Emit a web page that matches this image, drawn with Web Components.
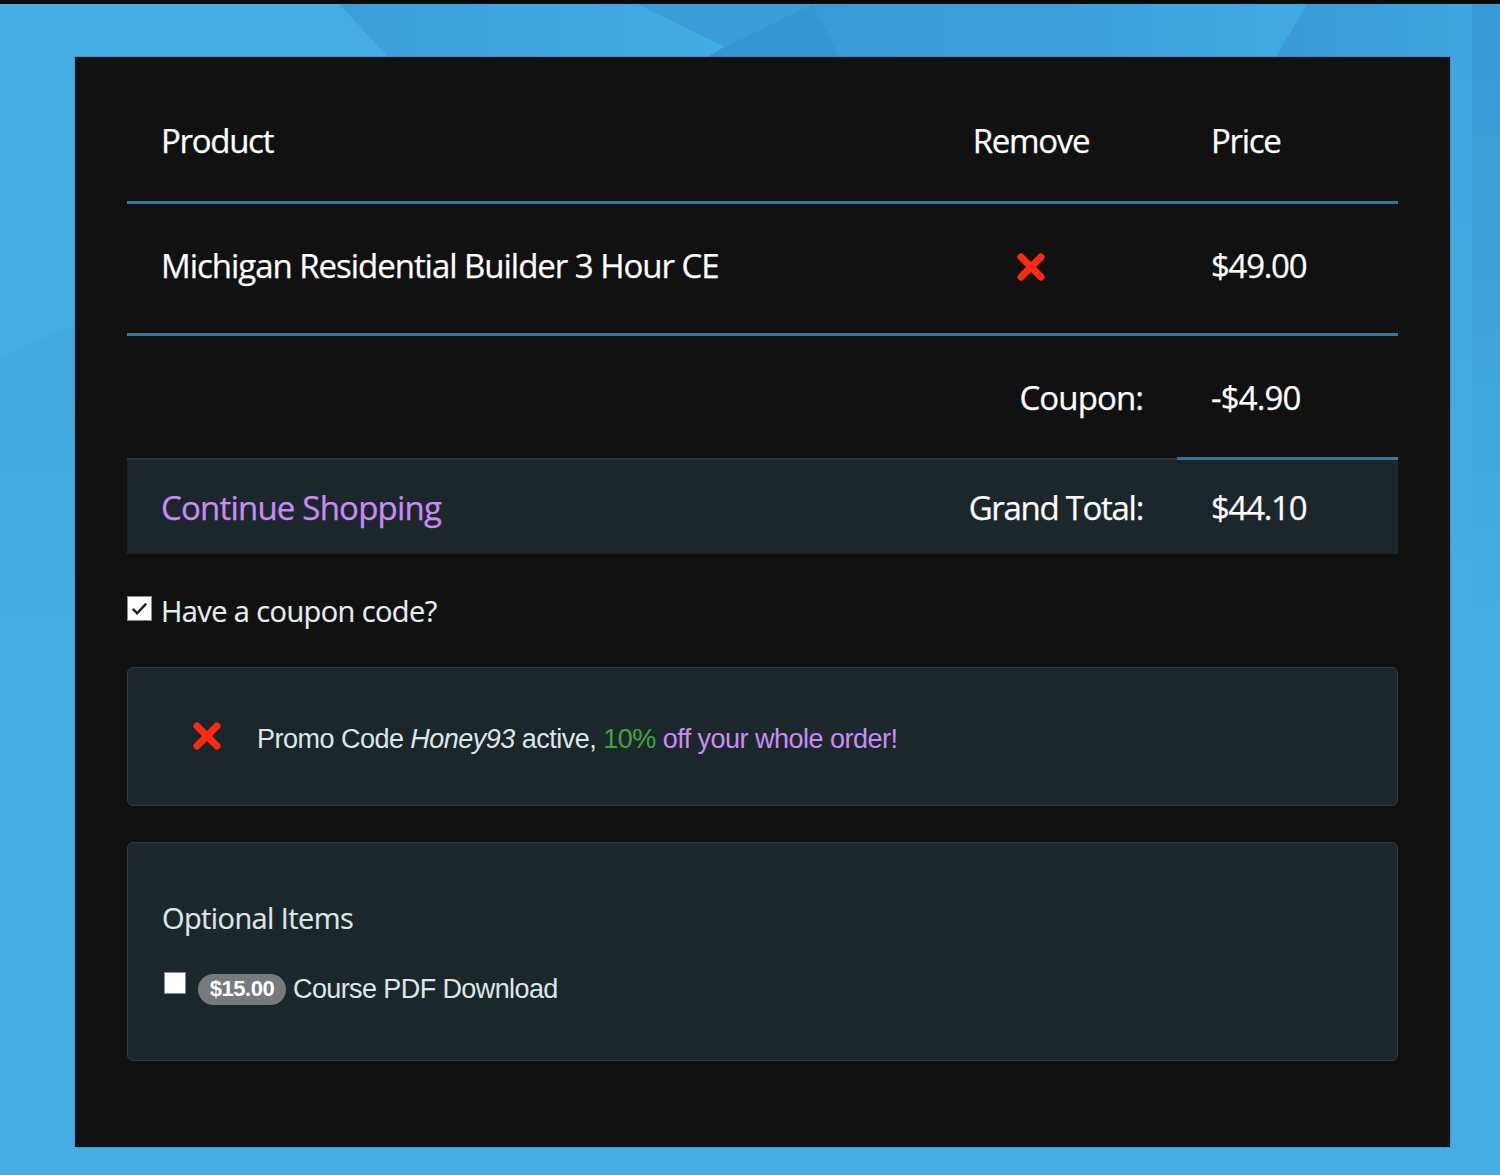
<!DOCTYPE html>
<html lang="en"><head><meta charset="utf-8"><title>Cart</title>
<style>
html,body{margin:0;padding:0;background:#46ade4}
body{font-family:"Open Sans","Noto Sans",sans-serif;color:#fff;width:1500px;height:1175px;overflow:hidden}
</style></head>
<body>
<page-backdrop>
  <cart-card>
    <cart-row kind="head"><cart-cell>Product</cart-cell><cart-cell align="center">Remove</cart-cell><cart-cell>Price</cart-cell></cart-row>
    <cart-row kind="item"><cart-cell wide>Michigan Residential Builder 3 Hour CE</cart-cell><cart-cell align="center"><cross-icon size="30" drop="4"></cross-icon></cart-cell><cart-cell>$49.00</cart-cell></cart-row>
    <cart-row kind="sub"><cart-cell></cart-cell><cart-cell align="end">Coupon:</cart-cell><cart-cell>-$4.90</cart-cell></cart-row>
    <cart-row kind="total"><cart-cell link>Continue Shopping</cart-cell><cart-cell align="end">Grand Total:</cart-cell><cart-cell rule>$44.10</cart-cell></cart-row>
    <coupon-toggle>Have a coupon code?</coupon-toggle>
    <promo-panel></promo-panel>
    <optional-panel></optional-panel>
  </cart-card>
</page-backdrop>
<script>
function def(name,css,html,extra){
  customElements.define(name,class extends HTMLElement{
    constructor(){super();this.attachShadow({mode:'open'}).innerHTML='<style>'+css+'</style>'+html;}
    connectedCallback(){if(extra)extra(this);}
  });
}
def('page-backdrop',`
  :host{display:block;position:relative;width:1500px;height:1175px;box-sizing:border-box;padding:57px 50px 28px 75px;background:#46ade4}
  svg{position:absolute;left:0;top:0;width:1500px;height:1175px}
  .bar{position:absolute;left:0;top:0;width:100%;height:4px;background:#07090c}
  ::slotted(*){position:relative}
`,`<svg viewBox="0 0 1500 1175" aria-hidden="true">
  <defs>
    <linearGradient id="r" gradientUnits="userSpaceOnUse" x1="0" y1="4" x2="0" y2="600"><stop offset="0" stop-color="#3ea5df"/><stop offset="1" stop-color="#46ade4"/></linearGradient>
    <linearGradient id="b" gradientUnits="userSpaceOnUse" x1="0" y1="4" x2="0" y2="620"><stop offset="0" stop-color="#3998d6"/><stop offset="1" stop-color="#46ade4"/></linearGradient>
    <linearGradient id="m" gradientUnits="userSpaceOnUse" x1="340" y1="0" x2="720" y2="0"><stop offset="0" stop-color="#3c9fdb"/><stop offset="1" stop-color="#43abe3"/></linearGradient>
    <linearGradient id="n" gradientUnits="userSpaceOnUse" x1="820" y1="0" x2="1300" y2="0"><stop offset="0" stop-color="#399bd8"/><stop offset=".5" stop-color="#3c9fdc"/><stop offset="1" stop-color="#42aae2"/></linearGradient>
    <linearGradient id="t" gradientUnits="userSpaceOnUse" x1="1275" y1="0" x2="1472" y2="0"><stop offset="0" stop-color="#3999d7"/><stop offset="1" stop-color="#3ea5df"/></linearGradient>
    <linearGradient id="l" gradientUnits="userSpaceOnUse" x1="0" y1="330" x2="0" y2="640"><stop offset="0" stop-color="#42a8e0"/><stop offset="1" stop-color="#46ade4"/></linearGradient>
  </defs>
  <polygon points="0,357 75,325 75,640 0,640" fill="url(#l)"/>
  <polygon points="339,4 637,4 737,57 388,57" fill="url(#m)"/>
  <polygon points="637,4 813,4 724,47" fill="#3a9cd9"/>
  <polygon points="813,4 840,57 707,57 724,47" fill="#3595d5"/>
  <polygon points="813,4 1307,4 1275,57 840,57" fill="url(#n)"/>
  <rect x="1450" y="4" width="22" height="600" fill="url(#r)"/>
  <polygon points="1307,4 1450,4 1450,58 1275,58" fill="url(#t)"/>
  <rect x="1472" y="4" width="28" height="620" fill="url(#b)"/>
</svg><div class="bar"></div><slot></slot>`);
def('cart-card',`
  :host{display:block;box-sizing:border-box;width:1375px;height:1090px;padding:23px 52px 0;background:#111112;box-shadow:0 0 0 1px rgba(30,90,130,.22)}
`,`<slot></slot>`);
def('cart-row',`
  :host{display:grid;box-sizing:border-box;grid-template-columns:758px 292px 221px;font-size:33px;letter-spacing:-1.3px;-webkit-text-stroke:.25px currentColor}
  :host([kind=head]){height:124px;border-bottom:3px solid #3a7599}
  :host([kind=item]){height:132px;border-bottom:3px solid #3a7599;padding-bottom:7px}
  :host([kind=sub]){height:122px;letter-spacing:-.9px}
  :host([kind=total]){height:96px;padding-top:2px;background:#1c272b;box-shadow:inset 0 2px 0 #2f3437;letter-spacing:-1.3px}
`,`<slot></slot>`);
def('cart-cell',`
  :host{display:flex;align-items:center;padding:0 34px;min-width:0;white-space:nowrap}
  :host([align=center]){justify-content:center;padding:0}
  :host([align=end]){justify-content:flex-end}
  :host([link]){color:#c98cf5;letter-spacing:-.8px}
  :host([wide]){letter-spacing:-1.03px}
  :host([rule]){box-shadow:inset 0 3px 0 #3a7599;margin-top:-3px;padding-top:3px}
`,`<slot></slot>`);
def('cross-icon',`
  :host{display:inline-flex;line-height:0}
  svg{display:block}
`,`<svg viewBox="0 0 30 30" fill="none" stroke="#ff2a12" stroke-width="7" stroke-linecap="round" stroke-linejoin="round"><path d="M5 5 25 25M25 5 5 25"/></svg>`,
  el=>{const s=el.getAttribute('size')||30,v=el.shadowRoot.querySelector('svg');v.setAttribute('width',s);v.setAttribute('height',s);if(el.hasAttribute('drop'))v.style.marginTop=el.getAttribute('drop')+'px';});
def('check-box',`
  :host{display:inline-block;box-sizing:border-box;background:#fff;border:1.5px solid #8a8a8a;flex:none;line-height:0}
  svg{display:none;width:100%;height:100%}
  :host([checked]) svg{display:block}
`,`<svg viewBox="0 0 24 24" fill="none" stroke="#222" stroke-width="2.6"><path d="M5 12.5l4.5 4.5L19 7"/></svg>`);
def('coupon-toggle',`
  :host{display:flex;align-items:center;gap:9px;margin-top:39px;height:34px;font-size:29px;letter-spacing:-.6px;color:#e6eef0;-webkit-text-stroke:.15px currentColor}
  check-box{width:25px;height:25px;margin-top:-4px}
`,`<check-box checked></check-box><span><slot></slot></span>`);
def('info-panel',`
  :host{display:block;box-sizing:border-box;width:1271px;background:#1c272b;border:1.5px solid #34393d;border-radius:6px}
`,`<slot></slot>`);
def('promo-panel',`
  :host{display:block;margin-top:40px}
  info-panel{height:139px;display:flex;align-items:center;padding:0 0 0 64px;font-family:"Liberation Sans",Arial,sans-serif;font-size:27px;letter-spacing:-.52px;color:#dfe6ea;white-space:nowrap}
  .in{display:flex;align-items:center;height:100%}
  cross-icon{margin:-2px 35px 0 0}
  .t{position:relative;top:3px}
  .g{color:#3fa73a}.p{color:#c98cf5}
`,`<info-panel><div class="in"><cross-icon size="30"></cross-icon><span class="t">Promo Code <i>Honey93</i> active, <span class="g">10%</span> <span class="p">off your whole order!</span></span></div></info-panel>`);
def('price-badge',`
  :host{display:inline-flex;align-items:center;justify-content:center;box-sizing:border-box;width:88px;height:31px;border-radius:16px;background:#767a7c;color:#fff;font:700 22px "Liberation Sans",Arial,sans-serif;letter-spacing:-.5px}
`,`<slot></slot>`);
def('optional-panel',`
  :host{display:block;margin-top:36px}
  info-panel{height:219px;padding:45px 0 0 34px}
  h3{margin:0;font:400 29px/60px "Open Sans","Noto Sans",sans-serif;letter-spacing:-.6px;color:#dfe6ea;height:60px;-webkit-text-stroke:.15px currentColor}
  .row{display:flex;align-items:center;margin-top:23px;font:27px "Liberation Sans",Arial,sans-serif;letter-spacing:-.6px;color:#dfe6ea;height:36px}
  check-box{width:22px;height:22px;margin:-12px 12px 0 2px}
  price-badge{margin-right:7px}
`,`<info-panel><h3>Optional Items</h3><div class="row"><check-box></check-box><price-badge>$15.00</price-badge><span>Course PDF Download</span></div></info-panel>`);
</script>
</body></html>
